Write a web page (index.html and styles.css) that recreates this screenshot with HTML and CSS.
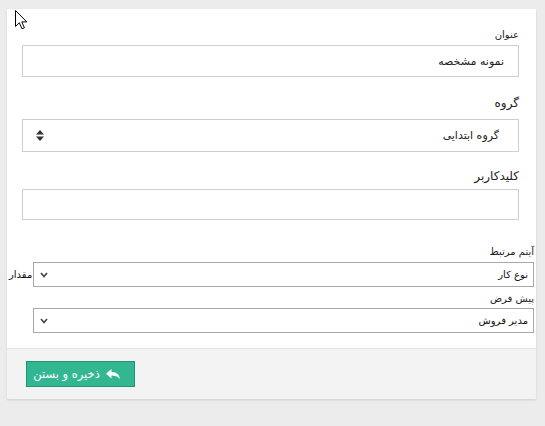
FILE: index.html
```
<!DOCTYPE html>
<html lang="fa">
<head>
<meta charset="utf-8">
<link rel="stylesheet" href="styles.css">
</head>
<body>
<div class="card">
  <div class="main">
    <div class="field f1">
      <div class="lbl small">عنوان</div>
      <div class="input"><span>نمونه مشخصه</span></div>
    </div>
    <div class="field f2">
      <div class="lbl big">گروه</div>
      <div class="input select-lg">
        <span>گروه ابتدایی</span>
        <svg class="spin" width="8" height="11" viewBox="0 0 8 11"><path d="M4 0 L8 4.5 H0 Z M0 6.5 H8 L4 11 Z" fill="#333"/></svg>
      </div>
    </div>
    <div class="field f3">
      <div class="lbl big">کلیدکاربر</div>
      <div class="input"></div>
    </div>
  </div>
  <div class="extra">
    <div class="lbl small row-lbl l1">آیتم مرتبط</div>
    <div class="row">
      <div class="sel"><span>نوع کار</span><svg class="chev" width="8" height="6" viewBox="0 0 8 6"><path d="M1 1 L4 4.5 L7 1" fill="none" stroke="#444" stroke-width="1.6"/></svg></div>
      <div class="side-lbl">مقدار</div>
    </div>
    <div class="lbl small row-lbl l2">پیش فرض</div>
    <div class="row">
      <div class="sel"><span>مدیر فروش</span><svg class="chev" width="8" height="6" viewBox="0 0 8 6"><path d="M1 1 L4 4.5 L7 1" fill="none" stroke="#444" stroke-width="1.6"/></svg></div>
      <div class="side-lbl"></div>
    </div>
  </div>
  <div class="footer">
    <button class="btn">
      <svg class="reply" width="14" height="10" viewBox="0 0 14 10"><path d="M5.5 0 L0 4.8 L5.5 9.6 V6.6 C9 6.6 11.5 7.4 14 10 C13.4 6 11 3.2 5.5 3 Z" fill="#fff"/></svg>
      <span>ذخیره و بستن</span>
    </button>
  </div>
</div>
<svg class="cursor" width="13" height="20" viewBox="0 0 13 20"><path d="M0.5 0.5 L0.5 16.5 L4.3 12.8 L7 18.8 L9.4 17.8 L6.8 11.9 L11.8 11.9 Z" fill="#fff" stroke="#000" stroke-width="1" stroke-linejoin="round"/></svg>
</body>
</html>
```
FILE: styles.css
```
html, body {
  margin: 0;
  padding: 0;
}
body {
  background: #ececec;
  padding: 9px 0 0 7px;
  font-family: "DejaVu Sans", "Noto Sans", sans-serif;
  color: #333;
  position: relative;
  height: 426px;
  box-sizing: border-box;
}
.card {
  width: 529px;
  background: #fff;
  box-shadow: 0 1px 2px rgba(0,0,0,0.12);
  direction: rtl;
}
.main {
  padding: 19px 17px 0 15px;
}
.lbl {
  text-align: right;
  color: #222;
}
.lbl.small {
  font-size: 10px;
  line-height: 14px;
}
.lbl.big {
  font-size: 12px;
  line-height: 16px;
}
.f1 .lbl { margin-bottom: 3px; }
.f2 { margin-top: 18px; }
.f2 .lbl { margin-bottom: 8px; }
.f3 { margin-top: 16px; }
.f3 .lbl { margin-bottom: 5px; }
.input {
  box-sizing: border-box;
  height: 32px;
  border: 1px solid #cfcfcf;
  background: #fff;
  display: flex;
  align-items: center;
  padding: 0 13px;
  font-size: 11px;
  color: #222;
}
.f1 .input { padding-right: 14px; }
.f3 .input { height: 31px; }
.select-lg {
  height: 33px;
  padding: 0 19px 0 13px;
  justify-content: space-between;
}
.spin { display: block; }
.extra {
  padding: 0 2px 0 1px;
  margin-top: 25px;
}
.row-lbl { margin-bottom: 3px; }
.l2 { margin-top: 5px; margin-bottom: 2px; }
.row {
  display: grid;
  grid-template-columns: 1fr 25px;
}
.sel {
  box-sizing: border-box;
  height: 25px;
  border: 1px solid #a8a8a8;
  display: flex;
  align-items: center;
  justify-content: space-between;
  padding: 0 5px 0 6px;
  font-size: 10px;
  color: #111;
}
.chev { display: block; margin-top: 1px; }
.side-lbl {
  font-size: 10px;
  line-height: 25px;
  color: #111;
  text-align: left;
  padding-left: 1px;
}
.footer {
  margin-top: 15px;
  background: #f3f3f3;
  border-top: 1px solid #e3e3e3;
  padding: 12px 0 12px 0;
  direction: ltr;
  display: flex;
}
.btn {
  margin-left: 19px;
  height: 26px;
  width: 109px;
  box-sizing: border-box;
  background: #33b793;
  border: 1px solid #23936f;
  color: #fff;
  font-family: "DejaVu Sans", sans-serif;
  font-size: 11.5px;
  display: flex;
  flex-direction: row-reverse;
  align-items: center;
  justify-content: center;
  gap: 6px;
  padding: 0 8px 0 0;
  direction: ltr;
}
.btn span { direction: rtl; }
.reply { display: block; }
.cursor {
  position: absolute;
  left: 15px;
  top: 10px;
}
```
